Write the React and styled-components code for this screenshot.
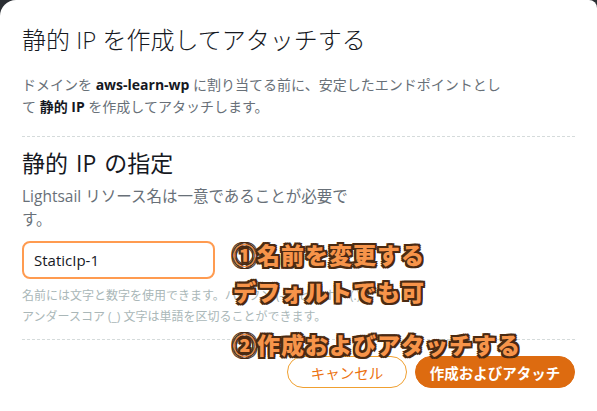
import React from 'react'
import styled, { createGlobalStyle } from 'styled-components'

const GlobalStyle = createGlobalStyle`
  html, body {
    margin: 0;
    padding: 0;
    background: #2a2e33;
  }
  body {
    font-family: 'Open Sans', 'Noto Sans CJK JP', sans-serif;
  }
`;

const Card = styled.div`
  position: relative;
  width: 597px;
  height: 411px;
  box-sizing: border-box;
  background: #fff;
  border-radius: 16px 8px 0 0;
  padding: 23px 22px 0 22px;
  display: flex;
  flex-direction: column;
`;

const Title = styled.h1`
  margin: 0;
  font-family: 'Open Sans', 'Noto Sans CJK JP', sans-serif;
  font-weight: 300;
  font-size: 24px;
  line-height: 34px;
  color: #16191f;
`;

const Lead = styled.p`
  margin: 17px 0 0;
  font-size: 14px;
  line-height: 22px;
  color: #687078;
  width: 485px;
  b {
    color: #16191f;
    font-weight: 700;
  }
`;

const Divider = styled.hr`
  margin: ${p => p.$top}px 0 0;
  border: 0;
  border-top: 1px dashed #d5dbdb;
  width: 553px;
`;

const SectionTitle = styled.h2`
  margin: 11px 0 0;
  font-weight: 400;
  font-size: 23px;
  line-height: 30px;
  word-spacing: 2px;
  color: #16191f;
`;

const Help = styled.p`
  margin: 7px 0 0;
  width: 355px;
  font-size: 15.5px;
  line-height: 23px;
  color: #687078;
`;

const Input = styled.input`
  margin-top: 10px;
  width: 193px;
  height: 38px;
  box-sizing: border-box;
  border: 2px solid #ff9b50;
  border-radius: 8px;
  padding: 0 10px;
  font-family: 'Open Sans', sans-serif;
  font-size: 15px;
  color: #16191f;
  outline: none;
`;

const Hint = styled.p`
  margin: 6px 0 0;
  width: 362px;
  font-size: 12px;
  line-height: 21px;
  color: #aab7b8;
`;

const Footer = styled.div`
  display: flex;
  justify-content: flex-end;
  gap: 8px;
  margin-top: 16px;
`;

const Button = styled.button`
  height: 32px;
  border-radius: 16px;
  font-family: 'Noto Sans CJK JP', sans-serif;
  font-size: 14.5px;
  box-sizing: border-box;
  cursor: pointer;
  padding: 0;
  width: ${p => p.$w}px;
  color: ${p => (p.$primary ? '#fff' : '#ec7211')};
  background: ${p => (p.$primary ? '#dd6b10' : '#fff')};
  border: 1px solid ${p => (p.$primary ? '#dd6b10' : '#f0a030')};
  font-weight: ${p => (p.$primary ? 700 : 400)};
`;

const Note = styled.div`
  position: absolute;
  left: 233px;
  top: ${p => p.$top}px;
  font-family: 'Noto Sans CJK JP', sans-serif;
  font-weight: 900;
  font-size: 23px;
  line-height: 28px;
  letter-spacing: 1px;
  color: #f7944a;
  text-shadow:
    -2px -2px 0 #4a2a12, 2px -2px 0 #4a2a12, -2px 2px 0 #4a2a12, 2px 2px 0 #4a2a12,
    0 -2px 0 #4a2a12, 0 2px 0 #4a2a12, -2px 0 0 #4a2a12, 2px 0 0 #4a2a12;
  white-space: nowrap;
`;

export default function App() {
  return (
    <>
      <GlobalStyle />
      <Card>
        <Title>静的 IP を作成してアタッチする</Title>
        <Lead>
          ドメインを <b>aws-learn-wp</b> に割り当てる前に、安定したエンドポイントとして <b>静的 IP</b> を作成してアタッチします。
        </Lead>
        <Divider $top={18} />
        <SectionTitle>静的 IP の指定</SectionTitle>
        <Help>Lightsail リソース名は一意であることが必要です。</Help>
        <Input defaultValue="StaticIp-1" />
        <Hint>
          名前には文字と数字を使用できます。ハイフン (-)、ピリオド (.)、アンダースコア (_) 文字は単語を区切ることができます。
        </Hint>
        <Divider $top={12} />
        <Footer>
          <Button $w={120}>キャンセル</Button>
          <Button $w={160} $primary>作成およびアタッチ</Button>
        </Footer>
        <Note $top={240}>①名前を変更する</Note>
        <Note $top={277}>デフォルトでも可</Note>
        <Note $top={330}>②作成およびアタッチする</Note>
      </Card>
    </>
  );
}
